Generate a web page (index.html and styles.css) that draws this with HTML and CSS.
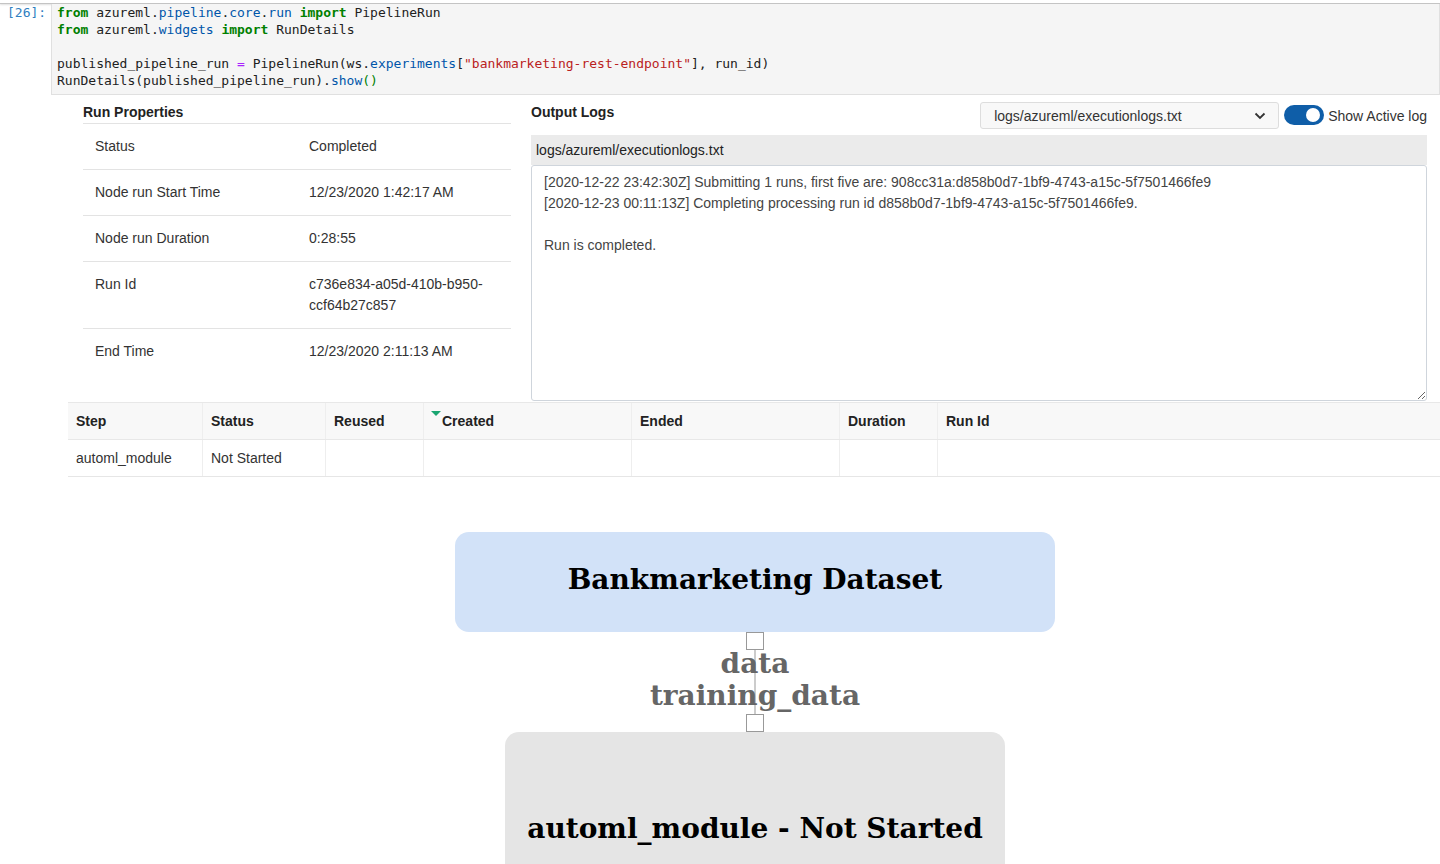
FILE: index.html
```html
<!DOCTYPE html>
<html>
<head>
<meta charset="utf-8">
<title>RunDetails</title>
<link rel="stylesheet" href="styles.css">
</head>
<body>
<div class="topbar"></div>
<div class="cell">
  <div class="prompt">[26]:</div>
  <div class="code">
    <div class="line"><span class="kw">from</span> azureml.<span class="pr">pipeline</span>.<span class="pr">core</span>.<span class="pr">run</span> <span class="kw">import</span> PipelineRun</div>
    <div class="line"><span class="kw">from</span> azureml.<span class="pr">widgets</span> <span class="kw">import</span> RunDetails</div>
    <div class="line">&nbsp;</div>
    <div class="line">published_pipeline_run <span class="op">=</span> PipelineRun(ws.<span class="pr">experiments</span>[<span class="st">"bankmarketing-rest-endpoint"</span>], run_id)</div>
    <div class="line">RunDetails(published_pipeline_run).<span class="pr">show</span><span class="br">()</span></div>
  </div>
</div>

<div class="output">
  <div class="widget-top">
    <div class="props">
      <div class="section-title">Run Properties</div>
      <div class="prop-row"><div class="prop-key">Status</div><div class="prop-val">Completed</div></div>
      <div class="prop-row"><div class="prop-key">Node run Start Time</div><div class="prop-val">12/23/2020 1:42:17 AM</div></div>
      <div class="prop-row"><div class="prop-key">Node run Duration</div><div class="prop-val">0:28:55</div></div>
      <div class="prop-row"><div class="prop-key">Run Id</div><div class="prop-val">c736e834-a05d-410b-b950-ccf64b27c857</div></div>
      <div class="prop-row last"><div class="prop-key">End Time</div><div class="prop-val">12/23/2020 2:11:13 AM</div></div>
    </div>
    <div class="logs">
      <div class="logs-head">
        <div class="logs-title">Output Logs</div>
        <div class="select">
          <span>logs/azureml/executionlogs.txt</span>
          <svg class="chev" width="12" height="8" viewBox="0 0 12 8"><path d="M1.5 1.5 L6 6 L10.5 1.5" fill="none" stroke="#333" stroke-width="1.8"/></svg>
        </div>
        <div class="toggle"><div class="knob"></div></div>
        <div class="toggle-label">Show Active log</div>
      </div>
      <div class="log-file">logs/azureml/executionlogs.txt</div>
      <div class="log-box">
        <div>[2020-12-22 23:42:30Z] Submitting 1 runs, first five are: 908cc31a:d858b0d7-1bf9-4743-a15c-5f7501466fe9</div>
        <div>[2020-12-23 00:11:13Z] Completing processing run id d858b0d7-1bf9-4743-a15c-5f7501466fe9.</div>
        <div>&nbsp;</div>
        <div>Run is completed.</div>
      </div>
    </div>
  </div>

  <div class="steps">
    <div class="steps-row head">
      <div class="c c1">Step</div>
      <div class="c c2">Status</div>
      <div class="c c3">Reused</div>
      <div class="c c4"><span class="sort"></span>Created</div>
      <div class="c c5">Ended</div>
      <div class="c c6">Duration</div>
      <div class="c c7">Run Id</div>
    </div>
    <div class="steps-row">
      <div class="c c1">automl_module</div>
      <div class="c c2">Not Started</div>
      <div class="c c3"></div>
      <div class="c c4"></div>
      <div class="c c5"></div>
      <div class="c c6"></div>
      <div class="c c7"></div>
    </div>
  </div>

  <div class="graph">
    <div class="node dataset">Bankmarketing Dataset</div>
    <div class="edge">
      <div class="port"></div>
      <div class="wire"></div>
      <div class="port"></div>
      <div class="edge-labels">
        <div>data</div>
        <div>training_data</div>
      </div>
    </div>
    <div class="node module">automl_module - Not Started</div>
  </div>
</div>
</body>
</html>
```
FILE: styles.css
```css
html, body {
  margin: 0;
  padding: 0;
  background: #ffffff;
}
body {
  font-family: "Liberation Sans", Arial, sans-serif;
  font-size: 14px;
  color: #333333;
  overflow: hidden;
  height: 864px;
}
.topbar {
  height: 3px;
  background: #ffffff;
  border-bottom: 1px solid #c4c4c4;
  box-shadow: 0 1px 2px rgba(0,0,0,0.12);
}
.cell {
  display: flex;
}
.prompt {
  width: 51px;
  box-sizing: border-box;
  padding: 0 0 0 7px;
  font-family: "DejaVu Sans Mono", monospace;
  font-size: 13px;
  line-height: 17px;
  color: #307fc1;
}
.code {
  flex: 1;
  background: #f5f5f5;
  border: 1px solid #e0e0e0;
  border-top: none;
  padding: 0 5px 5px 5px;
  font-family: "DejaVu Sans Mono", monospace;
  font-size: 13px;
  line-height: 17px;
  color: #212121;
}
.line {
  white-space: pre;
  height: 17px;
}
.kw { color: #008000; font-weight: bold; }
.pr { color: #0055aa; }
.op { color: #aa22ff; }
.st { color: #ba2121; }
.br { color: #008000; }

.output {
  margin-left: 68px;
}
.widget-top {
  display: flex;
  padding: 0 13px 0 15px;
}
.props {
  width: 428px;
  flex: none;
}
.section-title {
  padding-top: 7px;
  line-height: 20px;
  padding-bottom: 1px;
  font-weight: bold;
  color: #222;
  border-bottom: 1px solid #e3e3e3;
}
.prop-row {
  display: flex;
  padding: 12px 0;
  line-height: 21px;
  border-bottom: 1px solid #e3e3e3;
}
.prop-row.last {
  border-bottom: none;
}
.prop-key {
  width: 214px;
  padding-left: 12px;
  flex: none;
}
.prop-val {
  flex: 1;
  padding-right: 12px;
}
.logs {
  flex: 1;
  margin-left: 20px;
}
.logs-head {
  display: flex;
  align-items: flex-start;
  height: 40px;
  box-sizing: border-box;
  padding-top: 7px;
}
.logs-title {
  font-weight: bold;
  color: #222;
  line-height: 20px;
  margin-right: auto;
}
.select {
  width: 299px;
  height: 27px;
  box-sizing: border-box;
  background: #f8f8f8;
  border: 1px solid #dddddd;
  border-radius: 3px;
  display: flex;
  align-items: center;
  justify-content: space-between;
  padding: 0 12px 0 13px;
  color: #333;
}
.chev { display: block; }
.toggle {
  width: 40px;
  height: 20px;
  border-radius: 10px;
  background: #0f5ea8;
  margin: 3px 0 0 5px;
  position: relative;
}
.knob {
  position: absolute;
  width: 14px;
  height: 14px;
  border-radius: 50%;
  background: #fff;
  top: 3px;
  right: 4px;
}
.toggle-label {
  margin-left: 4px;
  line-height: 20px;
  margin-top: 4px;
  color: #333;
}
.log-file {
  height: 30px;
  line-height: 30px;
  background: #ebebeb;
  padding-left: 5px;
  color: #222;
}
.log-box {
  height: 236px;
  box-sizing: border-box;
  border: 1px solid #cfd5dc;
  border-radius: 3px;
  padding: 6px 12px;
  line-height: 21px;
  color: #444;
  overflow: auto;
  resize: both;
}
.steps {
  margin-top: 1px;
  border-top: 1px solid #e8e8e8;
  border-bottom: 1px solid #e6e6e6;
  width: 1372px;
}
.steps-row {
  display: flex;
  height: 36px;
  align-items: stretch;
}
.steps-row.head {
  background: #f8f8f8;
  font-weight: bold;
  color: #222;
  border-bottom: 1px solid #e8e8e8;
}
.c {
  box-sizing: border-box;
  padding-left: 8px;
  line-height: 36px;
  border-right: 1px solid #eeeeee;
  position: relative;
}
.c1 { width: 135px; }
.c2 { width: 123px; }
.c3 { width: 98px; }
.c4 { width: 208px; padding-left: 18px; }
.c5 { width: 208px; }
.c6 { width: 98px; }
.c7 { flex: 1; border-right: none; }
.sort {
  position: absolute;
  left: 7px;
  top: 8px;
  width: 0;
  height: 0;
  border-left: 5px solid transparent;
  border-right: 5px solid transparent;
  border-top: 5px solid #1ba672;
}
.graph {
  display: flex;
  flex-direction: column;
  align-items: center;
  margin-top: 55px;
  padding-left: 2px;
  font-family: "DejaVu Serif", serif;
  font-weight: bold;
}
.node {
  display: flex;
  align-items: center;
  justify-content: center;
  border-radius: 14px;
  color: #000;
  font-size: 28px;
  box-sizing: border-box;
}
.dataset {
  width: 600px;
  height: 100px;
  padding-bottom: 6px;
  background: #d2e2f8;
}
.module {
  width: 500px;
  height: 200px;
  padding-bottom: 8px;
  background: #e5e5e5;
}
.edge {
  position: relative;
  display: flex;
  flex-direction: column;
  align-items: center;
  height: 100px;
}
.port {
  width: 16px;
  height: 16px;
  border: 1.5px solid #999;
  background: #fff;
  box-sizing: content-box;
}
.wire {
  width: 2px;
  flex: 1;
  background: #cccccc;
}
.edge-labels {
  position: absolute;
  left: 50%;
  top: 16px;
  transform: translateX(-50%);
  text-align: center;
  font-size: 28px;
  line-height: 32px;
  color: #666;
  white-space: nowrap;
}
```
